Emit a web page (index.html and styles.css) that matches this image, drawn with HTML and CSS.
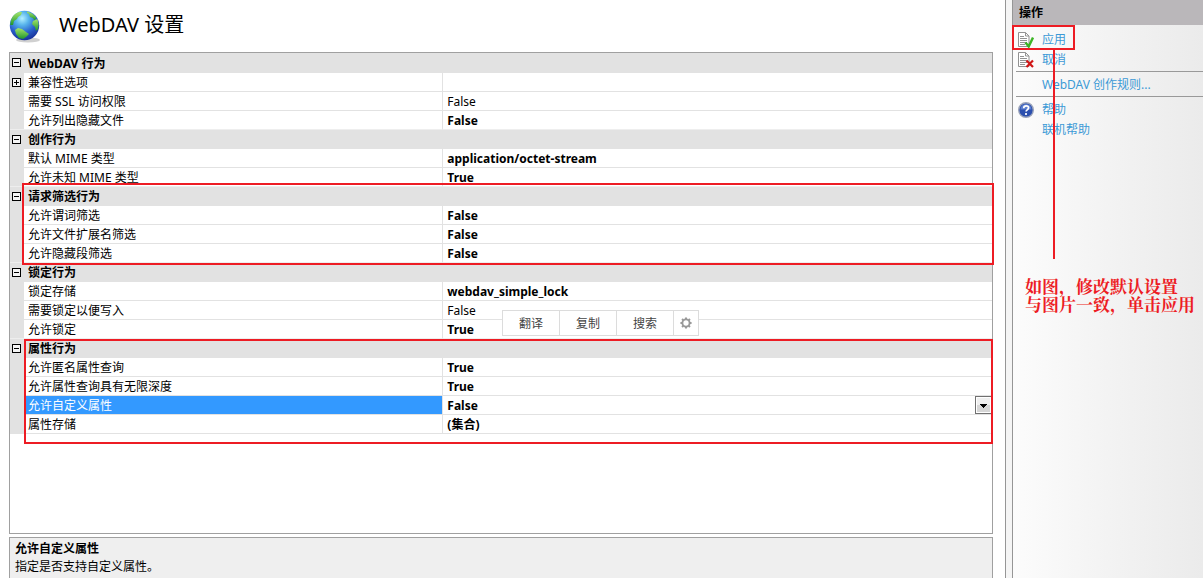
FILE: index.html
```html
<!DOCTYPE html>
<html lang="zh-CN">
<head>
<meta charset="utf-8">
<meta name="viewport" content="width=device-width, initial-scale=1">
<title>WebDAV 设置</title>
<link rel="stylesheet" href="styles.css">
</head>
<body>
<div class="window">
  <main class="content">
    <header class="page-header">
      <svg class="globe" viewBox="0 0 32 34" aria-hidden="true">
        <defs>
          <radialGradient id="sea" cx="42%" cy="26%" r="76%">
            <stop offset="0" stop-color="#b4f0ff"/>
            <stop offset=".3" stop-color="#58b4ec"/>
            <stop offset=".65" stop-color="#2a62cc"/>
            <stop offset="1" stop-color="#172f98"/>
          </radialGradient>
          <linearGradient id="land" x1="0" y1="0" x2="0" y2="1">
            <stop offset="0" stop-color="#a4e46c"/>
            <stop offset="1" stop-color="#1f962b"/>
          </linearGradient>
        </defs>
        <ellipse cx="19" cy="30" rx="12" ry="2.500" fill="#b0b0b0" opacity=".6"/>
        <circle cx="15.500" cy="15.500" r="14.700" fill="url(#sea)"/>
        <path d="M2 10 Q4 4 10 2 L13 2 L12 5 L9 7 L8 9 L5 11 L4 15 L1.200 15z" fill="url(#land)"/>
        <path d="M18 1.500 Q24 3 27 7 L27 9 L25 10 L24 8 L21 7 L20 4 L18 3z" fill="url(#land)"/>
        <path d="M24 11 L28.500 9 Q30.500 14 29 19 L27 21 L26 17 L23 14z" fill="url(#land)"/>
        <path d="M6 20 L9 18 L13 19 L17 22 L20 24 L17 27 L14 29 L10 28 L7 24z" fill="url(#land)"/>
      </svg>
      <h1 class="page-title">WebDAV 设置</h1>
    </header>

    <section class="property-grid">
      <table class="properties">
        <colgroup><col class="col-gutter"><col class="col-name"><col></colgroup>
        <tbody>
          <tr class="category"><td class="gutter"><button class="toggle" aria-label="折叠 WebDAV 行为"></button></td><th colspan="2">WebDAV 行为</th></tr>
          <tr><td class="gutter"><button class="toggle closed" aria-label="展开 兼容性选项"></button></td><th>兼容性选项</th><td></td></tr>
          <tr><td class="gutter"></td><th>需要 SSL 访问权限</th><td>False</td></tr>
          <tr class="last"><td class="gutter"></td><th>允许列出隐藏文件</th><td class="changed">False</td></tr>
        </tbody>
        <tbody>
          <tr class="category"><td class="gutter"><button class="toggle" aria-label="折叠 创作行为"></button></td><th colspan="2">创作行为</th></tr>
          <tr><td class="gutter"></td><th>默认 MIME 类型</th><td class="changed">application/octet-stream</td></tr>
          <tr class="last"><td class="gutter"></td><th>允许未知 MIME 类型</th><td class="changed">True</td></tr>
        </tbody>
        <tbody>
          <tr class="category"><td class="gutter"><button class="toggle" aria-label="折叠 请求筛选行为"></button></td><th colspan="2">请求筛选行为</th></tr>
          <tr><td class="gutter"></td><th>允许谓词筛选</th><td class="changed">False</td></tr>
          <tr><td class="gutter"></td><th>允许文件扩展名筛选</th><td class="changed">False</td></tr>
          <tr class="last"><td class="gutter"></td><th>允许隐藏段筛选</th><td class="changed">False</td></tr>
        </tbody>
        <tbody>
          <tr class="category"><td class="gutter"><button class="toggle" aria-label="折叠 锁定行为"></button></td><th colspan="2">锁定行为</th></tr>
          <tr><td class="gutter"></td><th>锁定存储</th><td class="changed">webdav_simple_lock</td></tr>
          <tr><td class="gutter"></td><th>需要锁定以便写入</th><td>False</td></tr>
          <tr class="last"><td class="gutter"></td><th>允许锁定</th><td class="changed">True</td></tr>
        </tbody>
        <tbody>
          <tr class="category"><td class="gutter"><button class="toggle" aria-label="折叠 属性行为"></button></td><th colspan="2">属性行为</th></tr>
          <tr><td class="gutter"></td><th>允许匿名属性查询</th><td class="changed">True</td></tr>
          <tr><td class="gutter"></td><th>允许属性查询具有无限深度</th><td class="changed">True</td></tr>
          <tr class="selected"><td class="gutter"></td><th><label for="custom-props">允许自定义属性</label></th>
            <td class="changed editor">
              <select id="custom-props" class="value-select"><option>False</option><option>True</option></select>
              <svg class="drop-arrow" viewBox="0 0 17 18" aria-hidden="true"><rect x=".5" y=".5" width="16" height="17" fill="#fff" stroke="#707070"/><path d="M2 2h13v7H2z" fill="#efefef"/><path d="M2 9h13v7H2z" fill="#d6d6d6"/><path d="M5 8h7v1h-1v1h-1v1H9v1H8v-1H7v-1H6V9H5z" fill="#000"/></svg>
            </td></tr>
          <tr><td class="gutter"></td><th>属性存储</th><td class="changed">(集合)</td></tr>
        </tbody>
      </table>
      <div class="mark mark-filter"></div>
      <div class="mark mark-property"></div>
      <div class="selection-menu">
        <button>翻译</button><button>复制</button><button>搜索</button><button class="gear" aria-label="设置"><svg viewBox="0 0 14 14" aria-hidden="true"><circle cx="7" cy="7" r="4.200" fill="none" stroke="#999" stroke-width="2.200"/><path d="M7 .5v2M7 11.500v2M.5 7h2M11.500 7h2M2.400 2.400l1.400 1.400M10.200 10.200l1.400 1.400M2.400 11.600l1.400-1.400M10.200 3.800l1.400-1.400" stroke="#999" stroke-width="2.400"/></svg></button>
      </div>
    </section>

    <section class="description">
      <h2>允许自定义属性</h2>
      <p>指定是否支持自定义属性。</p>
    </section>
  </main>

  <aside class="actions">
    <h2 class="actions-title">操作</h2>
    <nav class="action-list">
      <a href="#apply" class="action"><svg viewBox="0 0 16 16" aria-hidden="true"><path d="M.5.500h7l3.500 3.500v10.500H.5z" fill="#fff" stroke="#929292"/><path d="M7.500.500V4H11M2 4.500h4M2 6.500h7M2 8.500h7M2 10.500h7M2 12.500h5" fill="none" stroke="#929292"/><path d="M7.500 10.500l3.200 4 4.300-9" fill="none" stroke="#3cb526" stroke-width="2.400"/></svg>应用</a>
      <a href="#cancel" class="action"><svg viewBox="0 0 16 16" aria-hidden="true"><path d="M.5.500h7l3.500 3.500v10.500H.5z" fill="#fff" stroke="#929292"/><path d="M7.500.500V4H11M2 4.500h4M2 6.500h7M2 8.500h7M2 10.500h7M2 12.500h5" fill="none" stroke="#929292"/><path d="M8.500 8.500l6.500 6.500M15 8.500L8.500 15" stroke="#d01616" stroke-width="2.200"/></svg>取消</a>
      <hr>
      <a href="#rules" class="action">WebDAV 创作规则...</a>
      <hr>
      <a href="#help" class="action"><svg viewBox="0 0 16 16" aria-hidden="true"><circle cx="8" cy="8" r="7.300" fill="#2b4fae" stroke="#9aa3ba" stroke-width="1.400"/><path d="M2.500 7.500a5.500 5.500 0 0 1 11 0z" fill="#5c7fd0"/><path d="M5.700 6.200q0-2.400 2.400-2.400 2.500 0 2.500 2 0 1.100-1.300 1.900-1.200.7-1.200 1.900M8 11v1.900" fill="none" stroke="#fff" stroke-width="1.700"/></svg>帮助</a>
      <a href="#online" class="action">联机帮助</a>
    </nav>
    <div class="mark mark-apply"></div>
    <div class="mark-line"></div>
    <p class="note">如图，修改默认设置<br>与图片一致，单击应用</p>
  </aside>
</div>
</body>
</html>
```
FILE: styles.css
```css
* { box-sizing: border-box; }

body {
  margin: 0;
  background: #fff;
  color: #000;
  font: 12px/18px "Noto Sans", "Noto Sans CJK SC", sans-serif;
}

button, select { font: inherit; color: inherit; }
h1, h2, p { margin: 0; }
h2 { font-size: 12px; }

.window { display: flex; min-height: 100vh; }

.content {
  flex: 1;
  display: flex;
  flex-direction: column;
  min-width: 0;
  padding: 0 12px 0 9px;
}

.page-header {
  display: flex;
  align-items: center;
  gap: 18px;
  height: 52px;
  padding-top: 2px;
}

.globe { width: 32px; height: 34px; }
.page-title { padding-bottom: 4px; font-size: 20px; font-weight: 400; line-height: 24px; }

/* Property grid */
.property-grid {
  position: relative;
  flex: 1;
  border: 1px solid #a0a0a0;
}

.properties {
  width: 100%;
  table-layout: fixed;
  border-collapse: separate;
  border-spacing: 0;
}

.col-gutter { width: 14px; }
.col-name { width: 42.7%; }

.properties th,
.properties td {
  height: 19px;
  padding: 2px 4px 0;
  border-bottom: 1px solid #e2e2e2;
  line-height: 16px;
  text-align: left;
  font-weight: 400;
  white-space: nowrap;
}

.properties th { border-right: 1px solid #e2e2e2; }
.properties tbody:first-of-type tr:first-child > * { height: 20px; }

.properties .gutter {
  padding: 0 2px;
  background: #e2e2e2;
  line-height: 0;
}

.properties .category th { background: #e2e2e2; font-weight: 700; }
.properties .changed { font-weight: 700; }
.properties .last > * { border-bottom-color: #eee; }
.properties .selected th { background: #39f; color: #fff; }

.toggle {
  display: block;
  width: 9px;
  height: 9px;
  padding: 0;
  border: 1px solid #000;
  background: linear-gradient(#000, #000) center / 5px 1px no-repeat #f4f4f4;
}

.toggle.closed {
  background:
    linear-gradient(#000, #000) center / 5px 1px no-repeat,
    linear-gradient(#000, #000) center / 1px 5px no-repeat #f4f4f4;
}

.editor { position: relative; }

.value-select {
  display: block;
  width: 100%;
  height: 16px;
  padding: 0;
  border: 0;
  background: none;
  line-height: 16px;
  appearance: none;
}

.drop-arrow {
  position: absolute;
  top: 0;
  right: 0;
  width: 17px;
  height: 18px;
  pointer-events: none;
}

.selection-menu {
  position: absolute;
  top: 257px;
  left: 492px;
  display: flex;
  border: 1px solid #dcdcdc;
  background: #fff;
  color: #444;
}

.selection-menu button {
  width: 57px;
  height: 24px;
  padding: 2px 0 0;
  border: 0;
  border-right: 1px solid #dcdcdc;
  background: none;
}

.selection-menu .gear {
  display: grid;
  place-items: center;
  width: 24px;
  padding: 0;
  border: 0;
}

.gear svg { width: 12px; height: 12px; }

.description {
  margin-top: 3px;
  padding: 2px 5px;
  border: 1px solid #a0a0a0;
  border-bottom: 0;
  background: #efefef;
}

/* Actions pane */
.actions {
  position: relative;
  width: 198px;
  border-left: 1px solid #969696;
  padding-left: 6px;
  background: #f5f5f5;
}

.actions::before {
  content: "";
  position: absolute;
  inset: 0 0 0 6px;
  border-left: 1px solid #969696;
  background: linear-gradient(90deg, #fcfcfc, #f3f3f3 50%, #ebebeb);
}

.actions-title {
  position: relative;
  margin-left: 1px;
  padding: 4px 6px 3px;
  background: #bab7ba;
}

.action-list {
  position: relative;
  padding-top: 4px;
}

.action {
  display: flex;
  align-items: center;
  padding: 2px 0 0 30px;
  line-height: 18px;
  color: #3c9ad6;
  text-decoration: none;
}

.action svg {
  width: 16px;
  height: 16px;
  margin: 0 8px 0 -24px;
}

.action-list hr {
  height: 1px;
  margin: 2px 0 2px 4px;
  border: 0;
  background: #999;
}

/* Red annotations */
.mark { position: absolute; border: 2px solid #ed1c24; pointer-events: none; }
.mark-filter { top: 130px; left: 12px; right: -2px; height: 82px; }
.mark-property { top: 286px; left: 14px; right: -1px; height: 105px; }
.mark-apply { top: 25px; left: 6px; width: 63px; height: 25px; }

.mark-line {
  position: absolute;
  top: 50px;
  left: 47px;
  width: 2px;
  height: 209px;
  background: #ed1c24;
  pointer-events: none;
}

.note {
  position: absolute;
  top: 279px;
  left: 19px;
  color: #ed1c24;
  font: 700 17px/18px "Liberation Serif", "Noto Serif CJK SC", "Noto Sans CJK SC", serif;
  white-space: nowrap;
}
```
